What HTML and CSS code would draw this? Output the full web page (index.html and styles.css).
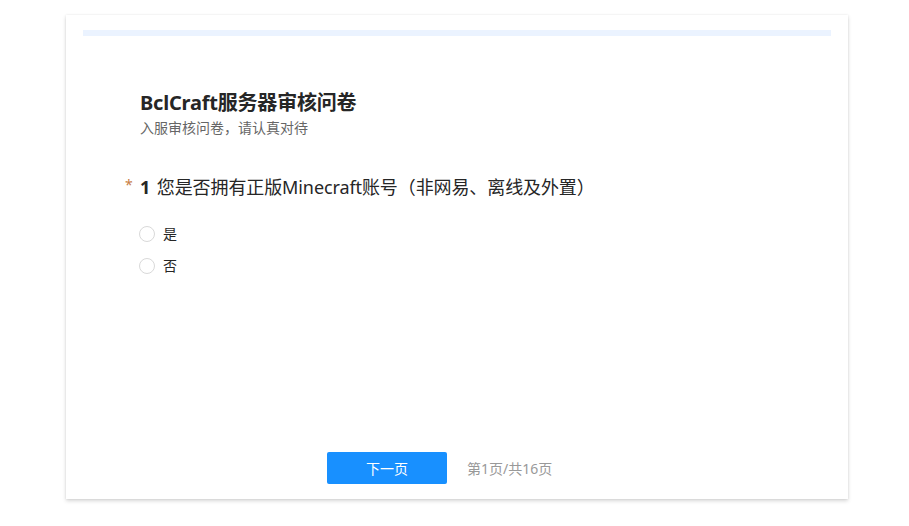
FILE: index.html
```html
<!doctype html>
<html lang="zh">
<head>
    <meta charset="utf-8">
    <title>BclCraft服务器审核问卷</title>
    <link rel="stylesheet" href="styles.css">
</head>
<body>
    <div class="card">
        <div class="progress"></div>
        <div class="survey">
            <h1 class="title">BclCraft服务器审核问卷</h1>
            <p class="desc">入服审核问卷，请认真对待</p>

            <div class="question">
                <div class="q-title">
                    <span class="required">*</span>
                    <span class="q-num">1</span>
                    <span>您是否拥有正版Minecraft账号（非网易、离线及外置）</span>
                </div>
                <label class="option"><span class="radio"></span>是</label>
                <label class="option"><span class="radio"></span>否</label>
            </div>
        </div>
        <div class="footer">
            <button class="btn-next">下一页</button>
            <span class="page-info">第1页/共16页</span>
        </div>
    </div>
</body>
</html>
```

FILE: styles.css
```css
body {
    margin: 0;
    padding-top: 15px;
    min-height: 526px;
    box-sizing: border-box;
    background: #fff;
    font-family: "Noto Sans", "Noto Sans CJK SC", sans-serif;
    color: #262626;
}
.card {
    margin-left: 66px;
    width: 782px;
    height: 484px;
    background: #fff;
    box-shadow: 0 2px 4px rgba(0, 0, 0, 0.16), 0 0 2px rgba(0, 0, 0, 0.08);
    display: flex;
    flex-direction: column;
    padding: 15px 17px 0;
    box-sizing: border-box;
}
.progress {
    height: 6px;
    background: #ebf3ff;
}
.survey {
    padding: 53px 0 0 57px;
    flex: 1;
}
.title {
    margin: 0;
    font-size: 20px;
    font-weight: bold;
    line-height: 28px;
    color: #262626;
    letter-spacing: -0.2px;
}
.desc {
    margin: 1px 0 0;
    font-size: 14px;
    line-height: 20px;
    color: #666;
}
.question {
    margin-top: 35px;
}
.q-title {
    position: relative;
    font-size: 18px;
    line-height: 28px;
    color: #262626;
    letter-spacing: -0.1px;
}
.required {
    position: absolute;
    left: -15px;
    top: -2px;
    color: #c77d44;
    font-size: 14px;
}
.q-num {
    font-weight: bold;
    margin-right: 2px;
}
.option {
    display: flex;
    align-items: center;
    font-size: 14px;
    line-height: 20px;
    height: 20px;
    margin-top: 12px;
    color: #262626;
}
.q-title + .option {
    margin-top: 23px;
}
.radio {
    width: 14px;
    height: 14px;
    border: 1px solid #d9d9d9;
    border-radius: 50%;
    margin: 0 8px 0 -1px;
}
.footer {
    display: flex;
    align-items: center;
    gap: 20px;
    padding: 0 0 15px 244px;
}
.btn-next {
    width: 120px;
    height: 32px;
    border: none;
    border-radius: 2px;
    background: #1890ff;
    color: #fff;
    font-family: inherit;
    font-size: 14px;
}
.page-info {
    font-size: 14px;
    color: #999;
}
```
